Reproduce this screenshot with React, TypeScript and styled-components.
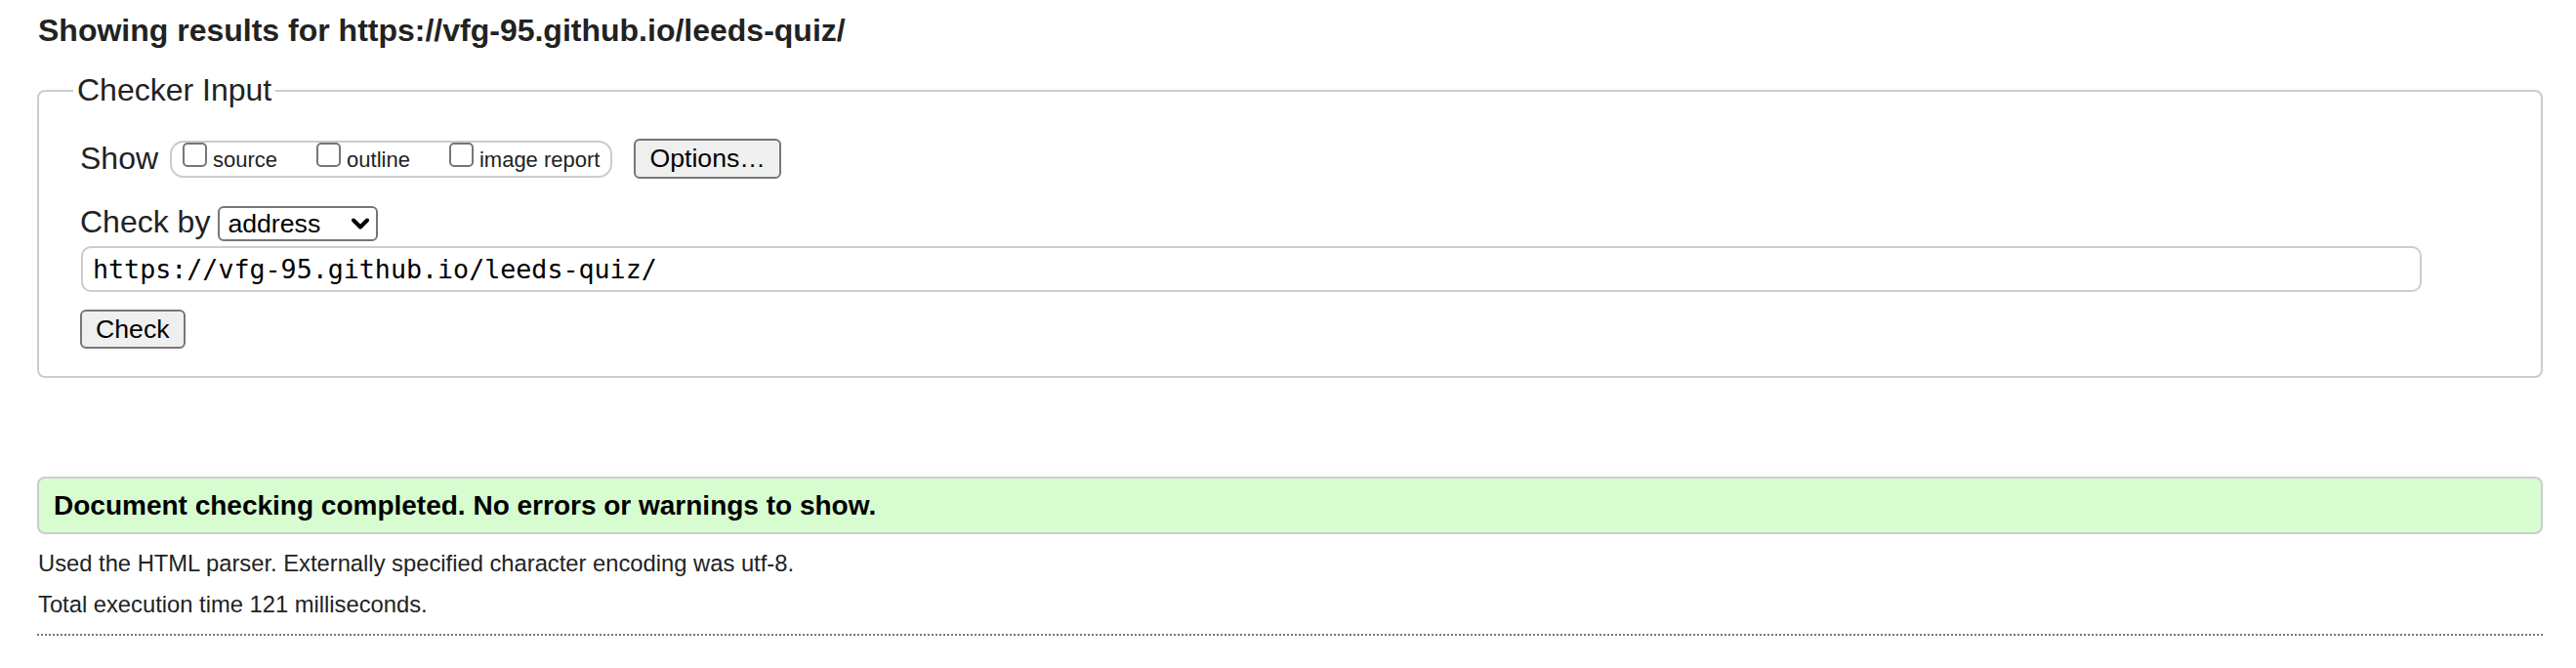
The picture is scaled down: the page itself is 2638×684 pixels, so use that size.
import styled, { createGlobalStyle } from "styled-components";

const GlobalStyle = createGlobalStyle`
  html, body {
    margin: 0;
    padding: 0;
    background: #fff;
  }
  body {
    font-family: "Liberation Sans", Arial, Helvetica, sans-serif;
    color: #222;
  }
`;

const Page = styled.main`
  padding: 13px 34px 40px 38px;
`;

const Heading = styled.h2`
  margin: 0 0 24px 1px;
  font-size: 32px;
  font-weight: bold;
  line-height: 37px;
  color: #222;
`;

const Fieldset = styled.fieldset`
  margin: 0;
  padding: 31px 42px 28px;
  border: 2px solid #ccc;
  border-radius: 8px;
  min-width: 0;
`;

const Legend = styled.legend`
  margin-left: -7px;
  padding: 0 4px;
  font-size: 32px;
  line-height: 37px;
  color: #222;
`;

const Row = styled.div<{ $gap?: number; $align?: string }>`
  display: flex;
  align-items: ${(p) => p.$align ?? "center"};
  margin-top: ${(p) => p.$gap ?? 0}px;
`;

const Label = styled.span`
  font-size: 32px;
  line-height: 37px;
  color: #222;
`;

const Pill = styled.div`
  display: flex;
  align-items: flex-start;
  gap: 40px;
  box-sizing: border-box;
  height: 38px;
  margin-left: 12px;
  padding: 0 11px 0 11px;
  border: 2px solid #ccc;
  border-radius: 14px;
`;

const Option = styled.label`
  display: flex;
  align-items: baseline;
  gap: 6px;
  font-size: 22px;
  line-height: 25px;
  color: #222;
`;

const Box = styled.input`
  appearance: none;
  box-sizing: border-box;
  width: 25px;
  height: 25px;
  margin: 0;
  border: 2px solid #767676;
  border-radius: 5px;
  background: #fff;
`;

const Button = styled.button<{ $ml?: number }>`
  box-sizing: border-box;
  height: ${(p) => (p.$ml ? 41 : 40)}px;
  margin: 0 0 0 ${(p) => p.$ml ?? 0}px;
  padding: 0 14px;
  font-family: "Liberation Sans", Arial, sans-serif;
  font-size: 26.67px;
  color: #000;
  background: #efefef;
  border: 2px solid #767676;
  border-radius: 6px;
`;

const SelectWrap = styled.span`
  position: relative;
  display: inline-block;
  margin-left: 8px;
`;

const Select = styled.select`
  appearance: none;
  box-sizing: border-box;
  width: 164px;
  height: 36px;
  padding: 0 0 0 8px;
  font-family: "Liberation Sans", Arial, sans-serif;
  font-size: 26.67px;
  color: #000;
  background: #fff;
  border: 2px solid #767676;
  border-radius: 6px;
`;

const Chevron = styled.svg`
  position: absolute;
  right: 9px;
  top: 12px;
  pointer-events: none;
`;

const UrlInput = styled.input`
  display: block;
  box-sizing: border-box;
  width: calc(100% - 81px);
  height: 47px;
  margin: 5px 0 0 1px;
  padding: 0 10px;
  font-family: "DejaVu Sans Mono", "Liberation Mono", monospace;
  font-size: 26.67px;
  color: #000;
  border: 2px solid #ccc;
  border-radius: 10px;
  outline: none;
`;

const Success = styled.p`
  display: flex;
  align-items: center;
  box-sizing: border-box;
  height: 59px;
  margin: 101px 0 0;
  padding: 0 15px;
  font-size: 28px;
  font-weight: bold;
  color: #000;
  background: #d6fcd0;
  border: 2px solid #ccc;
  border-radius: 8px;
`;

const Info = styled.p<{ $top: number }>`
  margin: ${(p) => p.$top}px 0 0 1px;
  font-size: 23.75px;
  line-height: 27px;
  color: #222;
`;

const Rule = styled.hr`
  margin: 17px 0 0;
  border: 0;
  border-top: 2px dotted #777;
`;

const options = ["source", "outline", "image report"];

export default function App() {
  return (
    <>
      <GlobalStyle />
      <Page>
        <Heading>Showing results for https://vfg-95.github.io/leeds-quiz/</Heading>
        <Fieldset>
          <Legend>Checker Input</Legend>
          <Row>
            <Label>Show</Label>
            <Pill>
              {options.map((o) => (
                <Option key={o}>
                  <Box type="checkbox" />
                  {o}
                </Option>
              ))}
            </Pill>
            <Button $ml={22}>Options…</Button>
          </Row>
          <Row $gap={26} $align="baseline">
            <Label>Check by</Label>
            <SelectWrap>
              <Select defaultValue="address">
                <option value="address">address</option>
                <option value="file">file upload</option>
                <option value="text">text input</option>
              </Select>
              <Chevron width="18" height="12" viewBox="0 0 18 12">
                <polyline
                  points="2,2.5 9,9.5 16,2.5"
                  fill="none"
                  stroke="#000"
                  strokeWidth="4"
                  strokeLinecap="round"
                  strokeLinejoin="round"
                />
              </Chevron>
            </SelectWrap>
          </Row>
          <UrlInput type="url" defaultValue="https://vfg-95.github.io/leeds-quiz/" />
          <Row $gap={18}>
            <Button>Check</Button>
          </Row>
        </Fieldset>
        <Success>Document checking completed. No errors or warnings to show.</Success>
        <Info $top={16}>Used the HTML parser. Externally specified character encoding was utf-8.</Info>
        <Info $top={15}>Total execution time 121 milliseconds.</Info>
        <Rule />
      </Page>
    </>
  );
}
